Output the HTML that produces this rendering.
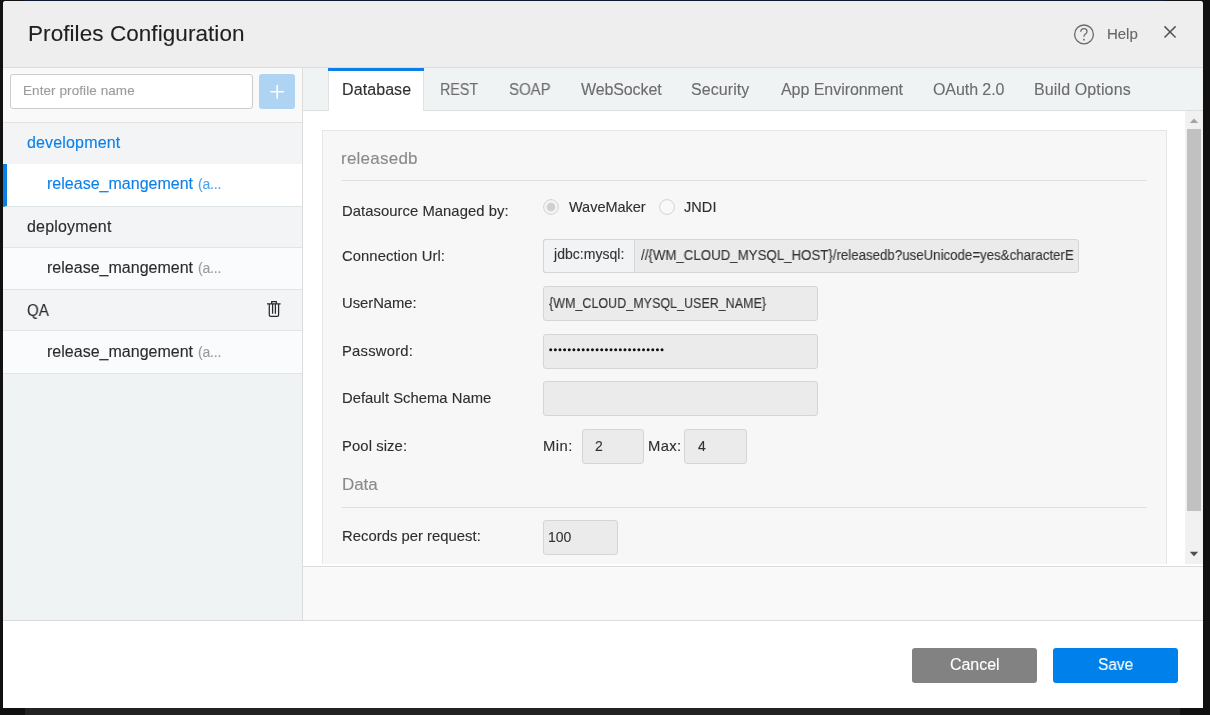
<!DOCTYPE html>
<html><head><meta charset="utf-8">
<style>
*{box-sizing:border-box;margin:0;padding:0}
html,body{width:1210px;height:715px;overflow:hidden;background:#111;font-family:"Liberation Sans",sans-serif}
div,span,svg{position:absolute}
.t{white-space:pre;line-height:normal;will-change:transform;-webkit-text-stroke:0.12px currentColor}
.inp{background:#ebebeb;border:1px solid #d5d5d5;border-radius:3px}
</style></head>
<body>
<div style="left:25px;top:0;width:1140px;height:1px;background:#0c1a30"></div>
<div style="left:25px;top:708px;width:1155px;height:7px;background:#232323"></div>
<div id="modal" style="left:3px;top:1px;width:1200px;height:707px;background:#fff;border-radius:3px 3px 0 0;overflow:hidden"></div>
<!-- header -->
<div style="left:3px;top:1px;width:1200px;height:67px;background:#eeeeee;border-bottom:1px solid #dcdcdc;border-radius:3px 3px 0 0"></div>
<svg style="left:1070px;top:20px" width="30" height="30" viewBox="1070 20 30 30">
  <circle cx="1084" cy="34.4" r="9.4" fill="none" stroke="#6a6a6a" stroke-width="1.3"/>
  <path d="M1080.7 31.8 Q1080.9 28.6 1084 28.6 Q1087 28.6 1087 31.4 Q1087 33 1085.4 34 Q1083.9 35 1083.9 36.8" fill="none" stroke="#6a6a6a" stroke-width="1.3"/>
  <circle cx="1083.9" cy="39.7" r="0.9" fill="#6a6a6a"/>
</svg>
<svg style="left:1160px;top:22px" width="20" height="20" viewBox="1160 22 20 20">
  <path d="M1164.5 26.4 L1175.6 37.5 M1175.6 26.4 L1164.5 37.5" stroke="#555" stroke-width="1.5" fill="none"/>
</svg>
<!-- sidebar -->
<div style="left:3px;top:68px;width:300px;height:552px;background:#f0f3f4;border-right:1px solid #dcdcdc"></div>
<div style="left:3px;top:620px;width:1200px;height:1px;background:#dadada"></div>
<div style="left:3px;top:68px;width:299px;height:55px;background:#f9f9f9;border-bottom:1px solid #e2e2e2"></div>
<div style="left:10px;top:74px;width:243px;height:35px;background:#fff;border:1px solid #cdcdcd;border-radius:3px"></div>
<div style="left:259px;top:74px;width:36px;height:35px;background:#afd3f3;border-radius:3px"></div>
<svg style="left:259px;top:74px" width="36" height="35" viewBox="259 74 36 35">
  <path d="M270.4 91.8 H284 M277.2 85 V98.7" stroke="#fff" stroke-width="1.6" fill="none"/>
</svg>
<div style="left:3px;top:123px;width:299px;height:41px;background:#f3f4f5"></div>
<div style="left:3px;top:164px;width:299px;height:42px;background:#fff"></div>
<div style="left:7px;top:206px;width:295px;height:1px;background:#dfe6e9"></div>
<div style="left:3px;top:164px;width:4px;height:43px;background:#0a7fe6;clip-path:polygon(0 0,100% 0,100% 97.7%,0 100%)"></div>
<div style="left:3px;top:207px;width:299px;height:41px;background:#f3f4f5;border-bottom:1px solid #dfe6e9"></div>
<div style="left:3px;top:248px;width:299px;height:42px;background:#fafbfc;border-bottom:1px solid #dfe6e9"></div>
<div style="left:3px;top:290px;width:299px;height:41px;background:#f3f4f5;border-bottom:1px solid #dfe6e9"></div>
<div style="left:3px;top:331px;width:299px;height:43px;background:#fafbfc;border-bottom:1px solid #dfe6e9"></div>
<svg style="left:264px;top:298px" width="20" height="22" viewBox="264 298 20 22">
  <path d="M267 303.9 H280.6 M271.7 303.9 V301.7 H276.3 V303.9 M269.3 303.9 V315 Q269.3 316.4 270.7 316.4 H277.2 Q278.6 316.4 278.6 315 V303.9 M272.6 304 V313.8 M275.4 304 V313.8" stroke="#2a2a2a" stroke-width="1.25" fill="none"/>
</svg>
<!-- tabs -->
<div style="left:303px;top:68px;width:900px;height:43px;background:#f0f3f4;border-bottom:1px solid #dedede"></div>
<div style="left:328px;top:68px;width:96px;height:43px;background:#fff;border-left:1px solid #e2e2e2;border-right:1px solid #e2e2e2"></div>
<div style="left:328px;top:68px;width:96px;height:3px;background:#0a7fe6"></div>
<!-- content -->
<div style="left:303px;top:111px;width:900px;height:456px;background:#fff;border-bottom:1px solid #dcdcdc"></div>
<div style="left:303px;top:567px;width:900px;height:54px;background:#f9f9f9;border-bottom:1px solid #dcdcdc"></div>
<div style="left:322px;top:130px;width:845px;height:434px;background:#f7f7f7;border:1px solid #e6e6e6;border-bottom:none"></div>
<div style="left:342px;top:180px;width:805px;height:1px;background:#dedede"></div>
<div style="left:342px;top:507px;width:805px;height:1px;background:#dedede"></div>
<!-- scrollbar -->
<div style="left:1185px;top:111px;width:18px;height:453px;background:#f1f1f1"></div>
<div style="left:1187px;top:129px;width:14px;height:382px;background:#c1c1c1"></div>
<svg style="left:1185px;top:111px" width="18" height="453" viewBox="1185 111 18 453">
  <path d="M1189.8 123 L1198.2 123 L1194 118.6 Z" fill="#a3a3a3"/>
  <path d="M1189.8 551.8 L1198.2 551.8 L1194 556.2 Z" fill="#505050"/>
</svg>
<!-- radios -->
<svg style="left:540px;top:196px" width="140" height="22" viewBox="540 196 140 22">
  <circle cx="551" cy="207" r="7.4" fill="#f3f3f3" stroke="#d3d3d3" stroke-width="1"/>
  <circle cx="551" cy="207" r="4.3" fill="#d0d0d0"/>
  <circle cx="667" cy="207" r="7.4" fill="#f9f9f9" stroke="#d3d3d3" stroke-width="1"/>
</svg>
<!-- inputs -->
<div class="inp" style="left:543px;top:239px;width:536px;height:34px"></div>
<div style="left:543px;top:239px;width:92px;height:34px;background:#f1f3f4;border:1px solid #d5d5d5;border-radius:3px 0 0 3px"></div>
<div class="inp" style="left:543px;top:286px;width:275px;height:35px"></div>
<div class="inp" style="left:543px;top:334px;width:275px;height:35px"></div>
<div class="inp" style="left:543px;top:381px;width:275px;height:35px"></div>
<div class="inp" style="left:582px;top:429px;width:62px;height:35px"></div>
<div class="inp" style="left:684px;top:429px;width:63px;height:35px"></div>
<div class="inp" style="left:543px;top:520px;width:75px;height:35px"></div>
<svg style="left:545px;top:344px" width="130" height="12" viewBox="545 344 130 12">
  <g fill="#111" id="dots"><circle cx="550.70" cy="349.8" r="1.5"/><circle cx="555.34" cy="349.8" r="1.5"/><circle cx="559.98" cy="349.8" r="1.5"/><circle cx="564.62" cy="349.8" r="1.5"/><circle cx="569.26" cy="349.8" r="1.5"/><circle cx="573.90" cy="349.8" r="1.5"/><circle cx="578.54" cy="349.8" r="1.5"/><circle cx="583.18" cy="349.8" r="1.5"/><circle cx="587.82" cy="349.8" r="1.5"/><circle cx="592.46" cy="349.8" r="1.5"/><circle cx="597.10" cy="349.8" r="1.5"/><circle cx="601.74" cy="349.8" r="1.5"/><circle cx="606.38" cy="349.8" r="1.5"/><circle cx="611.02" cy="349.8" r="1.5"/><circle cx="615.66" cy="349.8" r="1.5"/><circle cx="620.30" cy="349.8" r="1.5"/><circle cx="624.94" cy="349.8" r="1.5"/><circle cx="629.58" cy="349.8" r="1.5"/><circle cx="634.22" cy="349.8" r="1.5"/><circle cx="638.86" cy="349.8" r="1.5"/><circle cx="643.50" cy="349.8" r="1.5"/><circle cx="648.14" cy="349.8" r="1.5"/><circle cx="652.78" cy="349.8" r="1.5"/><circle cx="657.42" cy="349.8" r="1.5"/><circle cx="662.06" cy="349.8" r="1.5"/></g>
</svg>
<!-- footer buttons -->
<div style="left:912px;top:648px;width:125px;height:35px;background:#828282;border-radius:3px"></div>
<div style="left:1053px;top:648px;width:125px;height:35px;background:#0080eb;border-radius:3px"></div>
<span class='t' style='left:27.90px;top:21.00px;font-size:22.5px;color:#1f1f1f;letter-spacing:0.067px;'>Profiles Configuration</span>
<span class='t' style='left:1106.60px;top:24.70px;font-size:15px;color:#666;letter-spacing:-0.033px;'>Help</span>
<span class='t' style='left:22.90px;top:82.80px;font-size:13.5px;color:#9b9b9b;letter-spacing:0.082px;'>Enter profile name</span>
<span class='t' style='left:26.50px;top:134.00px;font-size:16px;color:#0c80e8;letter-spacing:0.160px;'>development</span>
<span class='t' style='left:47.30px;top:174.70px;font-size:16px;color:#0c80e8;letter-spacing:0.012px;'>release_mangement</span>
<span class='t' style='left:197.90px;top:175.70px;font-size:14px;color:#4fa2ec;letter-spacing:-0.175px;'>(a...</span>
<span class='t' style='left:26.50px;top:218.00px;font-size:16px;color:#2b2b2b;letter-spacing:0.178px;'>deployment</span>
<span class='t' style='left:47.30px;top:258.50px;font-size:16px;color:#2b2b2b;letter-spacing:0.012px;'>release_mangement</span>
<span class='t' style='left:197.90px;top:259.50px;font-size:14px;color:#9a9a9a;letter-spacing:-0.175px;'>(a...</span>
<span class='t' style='left:26.86px;top:301.80px;font-size:16px;color:#2b2b2b;letter-spacing:0.000px;transform:scaleX(0.9409);transform-origin:0 0;'>QA</span>
<span class='t' style='left:47.30px;top:342.60px;font-size:16px;color:#2b2b2b;letter-spacing:0.012px;'>release_mangement</span>
<span class='t' style='left:197.90px;top:343.60px;font-size:14px;color:#9a9a9a;letter-spacing:-0.175px;'>(a...</span>
<span class='t' style='left:341.70px;top:81.40px;font-size:16px;color:#2f2f2f;letter-spacing:0.086px;'>Database</span>
<span class='t' style='left:440.41px;top:81.40px;font-size:16px;color:#6c6c6c;letter-spacing:0.000px;transform:scaleX(0.8905);transform-origin:0 0;'>REST</span>
<span class='t' style='left:508.76px;top:81.40px;font-size:16px;color:#6c6c6c;letter-spacing:0.000px;transform:scaleX(0.9372);transform-origin:0 0;'>SOAP</span>
<span class='t' style='left:581.40px;top:81.40px;font-size:16px;color:#6c6c6c;letter-spacing:-0.112px;'>WebSocket</span>
<span class='t' style='left:691.30px;top:81.40px;font-size:16px;color:#6c6c6c;letter-spacing:0.071px;'>Security</span>
<span class='t' style='left:780.70px;top:81.40px;font-size:16px;color:#6c6c6c;letter-spacing:-0.050px;'>App Environment</span>
<span class='t' style='left:933.20px;top:81.40px;font-size:16px;color:#6c6c6c;letter-spacing:-0.075px;'>OAuth 2.0</span>
<span class='t' style='left:1034.40px;top:81.40px;font-size:16px;color:#6c6c6c;letter-spacing:0.125px;'>Build Options</span>
<span class='t' style='left:341.30px;top:149.00px;font-size:17px;color:#8a8a8a;letter-spacing:0.237px;'>releasedb</span>
<span class='t' style='left:341.60px;top:203.00px;font-size:14.8px;color:#2e2e2e;letter-spacing:0.057px;'>Datasource Managed by:</span>
<span class='t' style='left:568.90px;top:199.00px;font-size:14.5px;color:#2e2e2e;letter-spacing:-0.025px;'>WaveMaker</span>
<span class='t' style='left:684.30px;top:199.00px;font-size:14.5px;color:#2e2e2e;letter-spacing:0.067px;'>JNDI</span>
<span class='t' style='left:341.60px;top:248.00px;font-size:14.8px;color:#2e2e2e;letter-spacing:0.064px;'>Connection Url:</span>
<span class='t' style='left:554.20px;top:246.30px;font-size:14px;color:#333;letter-spacing:0.030px;'>jdbc:mysql:</span>
<span class='t' style='left:341.60px;top:295.10px;font-size:14.8px;color:#2e2e2e;letter-spacing:-0.025px;'>UserName:</span>
<span class='t' style='left:549.20px;top:294.70px;font-size:14px;color:#333;letter-spacing:0.000px;transform:scaleX(0.8942);transform-origin:0 0;'>{WM_CLOUD_MYSQL_USER_NAME}</span>
<span class='t' style='left:341.60px;top:342.50px;font-size:14.8px;color:#2e2e2e;letter-spacing:0.225px;'>Password:</span>
<span class='t' style='left:341.60px;top:389.60px;font-size:14.8px;color:#2e2e2e;letter-spacing:0.022px;'>Default Schema Name</span>
<span class='t' style='left:341.60px;top:438.40px;font-size:14.8px;color:#2e2e2e;letter-spacing:0.100px;'>Pool size:</span>
<span class='t' style='left:542.80px;top:438.40px;font-size:14.8px;color:#2e2e2e;letter-spacing:0.500px;'>Min:</span>
<span class='t' style='left:647.50px;top:438.40px;font-size:14.8px;color:#2e2e2e;letter-spacing:0.333px;'>Max:</span>
<span class='t' style='left:594.80px;top:437.50px;font-size:14px;color:#333;letter-spacing:0.000px;'>2</span>
<span class='t' style='left:698.00px;top:437.50px;font-size:14px;color:#333;letter-spacing:0.000px;'>4</span>
<span class='t' style='left:341.60px;top:474.50px;font-size:17px;color:#8a8a8a;letter-spacing:-0.067px;'>Data</span>
<span class='t' style='left:341.60px;top:528.40px;font-size:14.8px;color:#2e2e2e;letter-spacing:0.032px;'>Records per request:</span>
<span class='t' style='left:548.20px;top:528.80px;font-size:14px;color:#333;letter-spacing:0.000px;'>100</span>
<span class='t' style='left:949.70px;top:655.90px;font-size:16px;color:#fff;letter-spacing:-0.040px;'>Cancel</span>
<span class='t' style='left:1098.03px;top:655.90px;font-size:16px;color:#fff;letter-spacing:0.000px;transform:scaleX(0.9657);transform-origin:0 0;'>Save</span>
<div style='position:absolute;left:635px;top:239px;width:438.6px;height:34px;overflow:hidden'><span class='t' style='left:5.80px;top:7.80px;font-size:14px;color:#333;letter-spacing:0.000px;transform:scaleX(0.9483);transform-origin:0 0;'>//{WM_CLOUD_MYSQL_HOST}/releasedb?useUnicode=yes&amp;characterEncoding</span></div>
</body></html>
